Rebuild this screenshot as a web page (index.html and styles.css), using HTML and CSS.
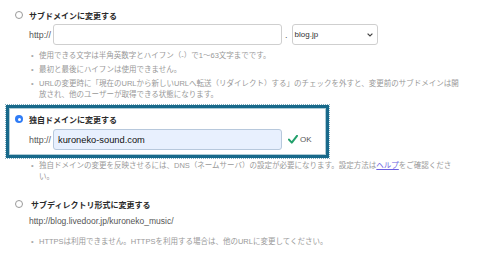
FILE: index.html
```html
<!DOCTYPE html>
<html lang="ja">
<head>
<meta charset="utf-8">
<link rel="stylesheet" href="styles.css">
</head>
<body>
<div class="page">
  <div class="option">
    <div class="opt-title"><span class="radio"></span>サブドメインに変更する</div>
    <div class="field-row">
      <span class="scheme">http://</span>
      <input class="text-input" type="text" value="">
      <span class="dot">.</span>
      <div class="select"><span>blog.jp</span><svg class="chev" width="6" height="4" viewBox="0 0 6 4"><path d="M0.6 0.6 L3 3 L5.4 0.6" fill="none" stroke="#444" stroke-width="1.2"/></svg></div>
    </div>
    <ul class="notes">
      <li>使用できる文字は半角英数字とハイフン（-）で1〜63文字までです。</li>
      <li>最初と最後にハイフンは使用できません。</li>
      <li>URLの変更時に「現在のURLから新しいURLへ転送（リダイレクト）する」のチェックを外すと、変更前のサブドメインは開<br>放され、他のユーザーが取得できる状態になります。</li>
    </ul>
  </div>

  <div class="option boxed">
    <div class="opt-title"><span class="radio checked"></span>独自ドメインに変更する</div>
    <div class="field-row">
      <span class="scheme">http://</span>
      <input class="text-input filled" type="text" value="kuroneko-sound.com">
      <span class="ok"><svg class="check" width="10" height="9" viewBox="0 0 10 9"><path d="M1 4.6 L3.8 7.6 L9 0.8" fill="none" stroke="#22a06b" stroke-width="2" stroke-linecap="round" stroke-linejoin="round"/></svg>OK</span>
    </div>
  </div>
  <div class="option after-box">
    <ul class="notes tight">
      <li>独自ドメインの変更を反映させるには、DNS（ネームサーバ）の設定が必要になります。設定方法は<a class="help" href="#">ヘルプ</a>をご確認くださ<br>い。</li>
    </ul>
  </div>

  <div class="option third">
    <div class="opt-title"><span class="radio"></span><span class="t3">サブディレクトリ形式に変更する</span></div>
    <div class="url">http://blog.livedoor.jp/kuroneko_music/</div>
    <ul class="notes wide">
      <li>HTTPSは利用できません。HTTPSを利用する場合は、他のURLに変更してください。</li>
    </ul>
  </div>
</div>
</body>
</html>
```
FILE: styles.css
```css
* { box-sizing: border-box; }
html, body { margin: 0; padding: 0; background: #fff; }
body {
  font-family: "Liberation Sans", "Noto Sans CJK JP", sans-serif;
  color: #333;
}
.page { padding-top: 8px; width: 480px; }

.option { padding-left: 15px; }

.opt-title {
  display: flex;
  align-items: center;
  height: 14px;
  font-size: 8px;
  font-weight: bold;
  color: #2a2a2a;
}
.t3 { margin-left: 2px; }

.radio {
  width: 8px;
  height: 8px;
  border: 1px solid #9a9a9a;
  border-radius: 50%;
  background: #fff;
  margin-right: 6px;
  flex: none;
}
.radio.checked {
  border: none;
  background: #2f7cf6;
  display: flex;
  align-items: center;
  justify-content: center;
}
.radio.checked::after {
  content: "";
  width: 3px;
  height: 3px;
  border-radius: 50%;
  background: #fff;
}

.field-row {
  display: flex;
  align-items: center;
  margin-top: 2px;
  padding-left: 14px;
  height: 21px;
}
.scheme {
  font-size: 8.8px;
  color: #555;
  margin-right: 2px;
}
.text-input {
  width: 229px;
  height: 21px;
  border: 1px solid #cfcfcf;
  border-radius: 3px;
  background: #fff;
  padding: 0 4px;
  font-family: "Liberation Sans", sans-serif;
  font-size: 9.3px;
  color: #111;
  margin: 0;
  outline: none;
}
.text-input.filled {
  background: #e8f0fe;
  border-color: #b7c8dc;
}
.dot {
  font-size: 9px;
  color: #555;
  margin: 0 4px 0 3px;
}
.select {
  width: 86px;
  height: 21px;
  border: 1px solid #cfcfcf;
  border-radius: 3px;
  background: #fff;
  display: flex;
  align-items: center;
  justify-content: space-between;
  padding: 0 4px 0 2px;
  font-size: 8px;
  color: #333;
}
.chev { display: block; }

.ok {
  display: flex;
  align-items: center;
  margin-left: 6px;
  font-size: 8px;
  color: #555;
}
.check { margin-right: 2px; }

.notes {
  list-style: none;
  margin: 4.5px 0 0;
  padding: 0 0 0 16px;
}
.notes li {
  font-size: 7.5px;
  line-height: 11px;
  color: #999;
  padding-left: 8px;
  text-indent: -8px;
  white-space: nowrap;
}
.notes li::before {
  content: "•";
  display: inline-block;
  width: 8px;
  text-indent: 0;
  color: #aaa;
}
.notes li + li { margin-top: 3px; }

.boxed {
  margin: 5.5px 0 0 6px;
  width: 323px;
  border: 3px solid #17698a;
  outline: 1px dotted rgba(23, 105, 138, 0.55);
  outline-offset: 0;
  box-shadow: inset 0 0 0 1px rgba(23, 105, 138, 0.35);
  padding: 4px 0 5px 6px;
}
.boxed .field-row { margin-top: 3px; }

.after-box .notes { margin-top: 1.5px; }

.help { color: #6b5fe0; text-decoration: underline; }

.third { margin-top: 15.5px; }
.url {
  margin-top: 4.5px;
  padding-left: 14px;
  font-size: 8.5px;
  line-height: 11px;
  color: #555;
}
.third .notes { margin-top: 9px; }
```
